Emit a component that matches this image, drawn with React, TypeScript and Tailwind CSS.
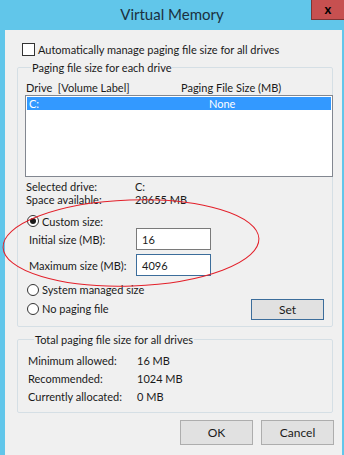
import React from 'react';

const font = { fontFamily: 'Lato, "Noto Sans", sans-serif' };

const Radio = ({ checked }: { checked?: boolean }) => (
  <span className="w-[12px] h-[12px] rounded-full border border-[#333] bg-white flex items-center justify-center shrink-0">
    {checked && <span className="w-[6px] h-[6px] rounded-full bg-[#1a1a1a]" />}
  </span>
);

const Info = ({ label, value, h }: { label: string; value: string; h: string }) => (
  <div className={`flex items-center leading-[13px] ${h}`}>
    <span className="w-[109px]">{label}</span>
    <span>{value}</span>
  </div>
);

export default function App() {
  return (
    <div
      className="relative w-[344px] h-[455px] overflow-hidden bg-[#61c6ea] flex flex-col text-[11px] leading-[15px] text-[#1a1a1a] whitespace-nowrap"
      style={font}
    >
      <div className="h-[30px] flex items-center justify-center relative">
        <span className="text-[15px] text-[#1b3040] -mt-[1px]">Virtual Memory</span>
        <div className="absolute right-0 top-0 w-[33px] h-[20px] bg-[#c75050] border-l border-b border-[#7d3535] flex items-center justify-center">
          <span className="text-[13px] font-bold text-black leading-none">x</span>
        </div>
      </div>

      <div className="flex-1 ml-[5px] mr-[2px] bg-[#f0f0f0] flex flex-col pt-[13px]">
        <div className="flex items-center ml-[17px] h-[13px]">
          <span className="w-[13px] h-[13px] border border-[#333] bg-white shrink-0" />
          <span className="ml-[3px]">Automatically manage paging file size for all drives</span>
        </div>

        <fieldset className="mt-[4px] ml-[12px] mr-[9px] border border-[#d5dfe5] rounded-[2px] pl-[7px] pb-[8px]">
          <legend className="ml-[6px] px-[1px]">Paging file size for each drive</legend>
          <div className="flex items-center h-[14px] mt-[5px] ml-[1px]">
            <span className="w-[155px]">Drive&nbsp;&nbsp;[Volume Label]</span>
            <span>Paging File Size (MB)</span>
          </div>
          <div className="mt-[1px] -mr-[1px] h-[82px] border border-[#828790] bg-white p-[1px]">
            <div className="h-[13px] bg-[#3399ff] text-white flex items-center">
              <span className="w-[182px] pl-[2px]">C:</span>
              <span>None</span>
            </div>
          </div>

          <div className="mt-[3px] ml-[1px]">
            <Info label="Selected drive:" value="C:" h="h-[13px]" />
            <Info label="Space available:" value="28655 MB" h="h-[13px]" />
          </div>

          <div className="flex items-center h-[16px] mt-[7px] ml-[2px]">
            <Radio checked />
            <span className="ml-[3px]">Custom size:</span>
          </div>
          <div className="flex items-center h-[22px] -mt-[1px] ml-[4px]">
            <span className="w-[107px]">Initial size (MB):</span>
            <div className="w-[75px] h-[22px] border border-[#7a7a7a] bg-white flex items-center pl-[5px]">16</div>
          </div>
          <div className="flex items-center h-[22px] mt-[4px] ml-[4px]">
            <span className="w-[107px]">Maximum size (MB):</span>
            <div className="w-[75px] h-[22px] border border-[#3c6d9b] bg-white flex items-center pl-[5px]">4096</div>
          </div>

          <div className="flex mt-[4px] ml-[2px] mr-[8px]">
            <div className="flex-1">
              <div className="flex items-center h-[19px]">
                <Radio />
                <span className="ml-[3px]">System managed size</span>
              </div>
              <div className="flex items-center h-[19px]">
                <Radio />
                <span className="ml-[3px]">No paging file</span>
              </div>
            </div>
            <div className="self-end mb-[-2px] w-[73px] h-[21px] border border-[#3c6d9b] bg-[#e1e1e1] flex items-center justify-center text-[12px]">
              Set
            </div>
          </div>
        </fieldset>

        <fieldset className="mt-[5px] ml-[12px] mr-[9px] border border-[#d5dfe5] rounded-[2px] pl-[10px] pb-[7px]">
          <legend className="ml-[6px] px-[1px]">Total paging file size for all drives</legend>
          <div className="mt-[4px]">
            <Info label="Minimum allowed:" value="16 MB" h="h-[18px]" />
            <Info label="Recommended:" value="1024 MB" h="h-[18px]" />
            <Info label="Currently allocated:" value="0 MB" h="h-[18px]" />
          </div>
        </fieldset>

        <div className="flex justify-end gap-[8px] mt-[7px] mr-[8px] text-[12px]">
          <div className="w-[73px] h-[25px] border border-[#adadad] bg-[#e1e1e1] flex items-center justify-center">OK</div>
          <div className="w-[73px] h-[25px] border border-[#adadad] bg-[#e1e1e1] flex items-center justify-center">Cancel</div>
        </div>
      </div>

      <svg className="absolute left-0 top-0 pointer-events-none" width="344" height="455">
        <ellipse cx="131" cy="243" rx="128" ry="43" fill="none" stroke="#e3202a" strokeWidth="1" transform="rotate(-2 131 243)" />
      </svg>
    </div>
  );
}
